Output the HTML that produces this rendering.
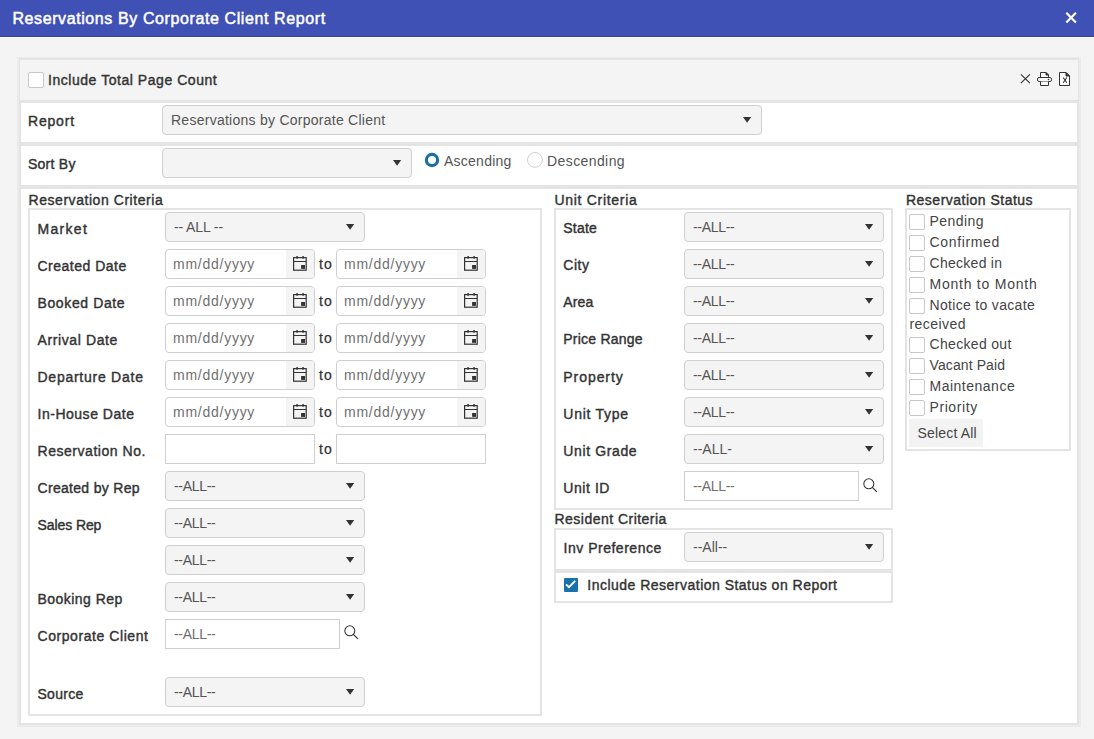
<!DOCTYPE html><html><head><meta charset="utf-8"><style>
*{box-sizing:border-box}
html,body{margin:0;padding:0}
body{width:1094px;height:739px;overflow:hidden;background:#f4f4f4;position:relative;font-family:"Liberation Sans",sans-serif}
.abs{position:absolute}
.t{position:absolute;white-space:nowrap}
.sel{position:absolute;border:1px solid #cfcfcf;border-radius:4px;background:#f4f4f4}
.st{position:absolute;left:8px;top:6px;font-size:14px;line-height:16px;white-space:nowrap}
.inp{position:absolute;border:1px solid #cfcfcf;background:#fff;overflow:hidden}
.ph{position:absolute;left:8px;top:6px;font-size:14px;line-height:16px;color:#707070;white-space:nowrap}
.addon{position:absolute;right:0;top:0;width:28px;height:28px;background:#f4f4f4}
.cb{border:1px solid #c9c9c9;border-radius:2px;background:#fff}
</style></head><body>
<div class="abs" style="left:0px;top:0px;width:1094px;height:36px;background:#3f51b5;;"></div>
<div class="abs" style="left:0px;top:36px;width:1094px;height:1px;background:#33429f;;"></div>
<div class="abs" style="left:0px;top:37px;width:1094px;height:1px;background:#fdfdfb;;"></div>
<div class="t" style="left:12.4px;top:10.06px;font-size:16px;line-height:18px;font-weight:normal;color:#fff;-webkit-text-stroke:0.5px #fff;letter-spacing:0.6px">Reservations By Corporate Client Report</div>
<svg class="abs" style="left:1064px;top:11px" width="14" height="14" viewBox="0 0 14 14"><path d="M2.3 1.8L11.9 11.5M11.9 1.8L2.3 11.5" stroke="#fff" stroke-width="2.2"/></svg>
<div class="abs" style="left:17px;top:57px;width:1064px;height:670px;background:#ebebeb;;"></div>
<div class="abs" style="left:19px;top:58px;width:1060px;height:667px;background:#e4e4e4;;"></div>
<div class="abs" style="left:20px;top:60px;width:1058px;height:40px;background:#f4f4f4;;"></div>
<div class="abs" style="left:21px;top:103px;width:1056px;height:39px;background:#fff;;"></div>
<div class="abs" style="left:21px;top:146px;width:1056px;height:39px;background:#fff;;"></div>
<div class="abs" style="left:21px;top:189px;width:1056px;height:534px;background:#fff;;"></div>
<div class="abs cb" style="left:28px;top:72px;width:16px;height:16px"></div>
<div class="t" style="left:48px;top:72.15px;font-size:14px;line-height:16px;font-weight:normal;color:#333;-webkit-text-stroke:0.4px #333;letter-spacing:0.543px;">Include Total Page Count</div>
<svg class="abs" style="left:1020px;top:73px" width="11" height="11" viewBox="0 0 11 11"><path d="M0.9 1.3L9.9 10.1M9.9 1.3L0.9 10.1" stroke="#333" stroke-width="1.15"/></svg>
<svg class="abs" style="left:1034px;top:68px" width="40" height="22" viewBox="0 0 40 22" fill="none" stroke="#333" stroke-width="1"><path d="M6.5 9.5V4.5H12L14.5 7V9.5" fill="#fff"/><path d="M12 4.5V7H14.5Z" fill="#333"/><rect x="3.5" y="9.5" width="14" height="4" rx="1.6" fill="#fff"/><path d="M6.5 13.5V17.5H14.5V13.5" fill="#fff"/><circle cx="14.5" cy="11.5" r="0.8" fill="#333" stroke="none"/><path d="M25.5 4.5H32L35.5 8V17.5H25.5Z" fill="#fff"/><path d="M32 4.5V8H35.5Z" fill="#333"/><path d="M29.2 9.5L32.8 14.7M32.8 9.5L29.2 14.7" stroke-width="1.1"/></svg>
<div class="t" style="left:28px;top:113.15px;font-size:14px;line-height:16px;font-weight:normal;color:#333;-webkit-text-stroke:0.4px #333;letter-spacing:0.8px;">Report</div>
<div class="sel" style="left:162px;top:105px;width:600px;height:30px"><span class="st" style="color:#555;letter-spacing:0.258px">Reservations by Corporate Client</span><svg style="position:absolute;left:580px;top:11px" width="9" height="7" viewBox="0 0 9 7"><path d="M0 0H8.2L4.1 5.8Z" fill="#333"/></svg></div>
<div class="t" style="left:28px;top:156.15px;font-size:14px;line-height:16px;font-weight:normal;color:#333;-webkit-text-stroke:0.4px #333;letter-spacing:0.25px;">Sort By</div>
<div class="sel" style="left:162px;top:148px;width:250px;height:30px"><span class="st" style="color:#555;letter-spacing:0px"></span><svg style="position:absolute;left:230px;top:11px" width="9" height="7" viewBox="0 0 9 7"><path d="M0 0H8.2L4.1 5.8Z" fill="#333"/></svg></div>
<svg class="abs" style="left:420px;top:148px" width="28" height="24" viewBox="0 0 28 24"><circle cx="12" cy="12" r="5.6" fill="#fff" stroke="#1a6ea8" stroke-width="3.1"/></svg>
<div class="t" style="left:444px;top:153.15px;font-size:14px;line-height:16px;font-weight:normal;color:#555;letter-spacing:0.25px">Ascending</div>
<svg class="abs" style="left:522px;top:148px" width="28" height="24" viewBox="0 0 28 24"><circle cx="12.9" cy="11.9" r="7.4" fill="#fff" stroke="#cfcfcf" stroke-width="1"/></svg>
<div class="t" style="left:547px;top:153.15px;font-size:14px;line-height:16px;font-weight:normal;color:#555;letter-spacing:0.41px">Descending</div>
<div class="t" style="left:28.5px;top:192.15px;font-size:14px;line-height:16px;font-weight:normal;color:#333;-webkit-text-stroke:0.4px #333;letter-spacing:0.553px;">Reservation Criteria</div>
<div class="abs" style="left:28px;top:208px;width:514px;height:508px;background:transparent;border:2px solid #e4e4e4;"></div>
<div class="t" style="left:37.5px;top:221.15px;font-size:14px;line-height:16px;font-weight:normal;color:#333;-webkit-text-stroke:0.4px #333;letter-spacing:1.3px;">Market</div>
<div class="sel" style="left:165px;top:212px;width:200px;height:30px"><span class="st" style="color:#555;letter-spacing:-0.125px">-- ALL --</span><svg style="position:absolute;left:180px;top:11px" width="9" height="7" viewBox="0 0 9 7"><path d="M0 0H8.2L4.1 5.8Z" fill="#333"/></svg></div>
<div class="t" style="left:37.5px;top:258.15px;font-size:14px;line-height:16px;font-weight:normal;color:#333;-webkit-text-stroke:0.4px #333;letter-spacing:0.5px;">Created Date</div>
<div class="inp" style="left:165px;top:249px;width:150px;height:30px;border-radius:4px"><span class="ph" style="left:7px;letter-spacing:0.744px">mm/dd/yyyy</span><div class="addon"><svg style="position:absolute;left:7px;top:5px" width="15" height="17" viewBox="0 0 15 17"><rect x="0.6" y="2.6" width="12.6" height="12.6" fill="none" stroke="#333" stroke-width="1.2"/><line x1="0.6" y1="6.5" x2="13.2" y2="6.5" stroke="#333" stroke-width="1.2"/><rect x="3.3" y="1" width="1.5" height="2.8" rx="0.5" fill="#333"/><rect x="9.3" y="1" width="1.5" height="2.8" rx="0.5" fill="#333"/><rect x="8.1" y="10" width="3.9" height="3.9" fill="#333"/></svg></div></div>
<div class="t" style="left:319px;top:256.15px;font-size:14px;line-height:16px;font-weight:normal;color:#333;-webkit-text-stroke:0.25px #333;letter-spacing:1.2px;">to</div>
<div class="inp" style="left:336px;top:249px;width:150px;height:30px;border-radius:4px"><span class="ph" style="left:7px;letter-spacing:0.744px">mm/dd/yyyy</span><div class="addon"><svg style="position:absolute;left:7px;top:5px" width="15" height="17" viewBox="0 0 15 17"><rect x="0.6" y="2.6" width="12.6" height="12.6" fill="none" stroke="#333" stroke-width="1.2"/><line x1="0.6" y1="6.5" x2="13.2" y2="6.5" stroke="#333" stroke-width="1.2"/><rect x="3.3" y="1" width="1.5" height="2.8" rx="0.5" fill="#333"/><rect x="9.3" y="1" width="1.5" height="2.8" rx="0.5" fill="#333"/><rect x="8.1" y="10" width="3.9" height="3.9" fill="#333"/></svg></div></div>
<div class="t" style="left:37.5px;top:295.15px;font-size:14px;line-height:16px;font-weight:normal;color:#333;-webkit-text-stroke:0.4px #333;letter-spacing:0.62px;">Booked Date</div>
<div class="inp" style="left:165px;top:286px;width:150px;height:30px;border-radius:4px"><span class="ph" style="left:7px;letter-spacing:0.744px">mm/dd/yyyy</span><div class="addon"><svg style="position:absolute;left:7px;top:5px" width="15" height="17" viewBox="0 0 15 17"><rect x="0.6" y="2.6" width="12.6" height="12.6" fill="none" stroke="#333" stroke-width="1.2"/><line x1="0.6" y1="6.5" x2="13.2" y2="6.5" stroke="#333" stroke-width="1.2"/><rect x="3.3" y="1" width="1.5" height="2.8" rx="0.5" fill="#333"/><rect x="9.3" y="1" width="1.5" height="2.8" rx="0.5" fill="#333"/><rect x="8.1" y="10" width="3.9" height="3.9" fill="#333"/></svg></div></div>
<div class="t" style="left:319px;top:293.15px;font-size:14px;line-height:16px;font-weight:normal;color:#333;-webkit-text-stroke:0.25px #333;letter-spacing:1.2px;">to</div>
<div class="inp" style="left:336px;top:286px;width:150px;height:30px;border-radius:4px"><span class="ph" style="left:7px;letter-spacing:0.744px">mm/dd/yyyy</span><div class="addon"><svg style="position:absolute;left:7px;top:5px" width="15" height="17" viewBox="0 0 15 17"><rect x="0.6" y="2.6" width="12.6" height="12.6" fill="none" stroke="#333" stroke-width="1.2"/><line x1="0.6" y1="6.5" x2="13.2" y2="6.5" stroke="#333" stroke-width="1.2"/><rect x="3.3" y="1" width="1.5" height="2.8" rx="0.5" fill="#333"/><rect x="9.3" y="1" width="1.5" height="2.8" rx="0.5" fill="#333"/><rect x="8.1" y="10" width="3.9" height="3.9" fill="#333"/></svg></div></div>
<div class="t" style="left:37.5px;top:332.15px;font-size:14px;line-height:16px;font-weight:normal;color:#333;-webkit-text-stroke:0.4px #333;letter-spacing:0.609px;">Arrival Date</div>
<div class="inp" style="left:165px;top:323px;width:150px;height:30px;border-radius:4px"><span class="ph" style="left:7px;letter-spacing:0.744px">mm/dd/yyyy</span><div class="addon"><svg style="position:absolute;left:7px;top:5px" width="15" height="17" viewBox="0 0 15 17"><rect x="0.6" y="2.6" width="12.6" height="12.6" fill="none" stroke="#333" stroke-width="1.2"/><line x1="0.6" y1="6.5" x2="13.2" y2="6.5" stroke="#333" stroke-width="1.2"/><rect x="3.3" y="1" width="1.5" height="2.8" rx="0.5" fill="#333"/><rect x="9.3" y="1" width="1.5" height="2.8" rx="0.5" fill="#333"/><rect x="8.1" y="10" width="3.9" height="3.9" fill="#333"/></svg></div></div>
<div class="t" style="left:319px;top:330.15px;font-size:14px;line-height:16px;font-weight:normal;color:#333;-webkit-text-stroke:0.25px #333;letter-spacing:1.2px;">to</div>
<div class="inp" style="left:336px;top:323px;width:150px;height:30px;border-radius:4px"><span class="ph" style="left:7px;letter-spacing:0.744px">mm/dd/yyyy</span><div class="addon"><svg style="position:absolute;left:7px;top:5px" width="15" height="17" viewBox="0 0 15 17"><rect x="0.6" y="2.6" width="12.6" height="12.6" fill="none" stroke="#333" stroke-width="1.2"/><line x1="0.6" y1="6.5" x2="13.2" y2="6.5" stroke="#333" stroke-width="1.2"/><rect x="3.3" y="1" width="1.5" height="2.8" rx="0.5" fill="#333"/><rect x="9.3" y="1" width="1.5" height="2.8" rx="0.5" fill="#333"/><rect x="8.1" y="10" width="3.9" height="3.9" fill="#333"/></svg></div></div>
<div class="t" style="left:37.5px;top:369.15px;font-size:14px;line-height:16px;font-weight:normal;color:#333;-webkit-text-stroke:0.4px #333;letter-spacing:0.746px;">Departure Date</div>
<div class="inp" style="left:165px;top:360px;width:150px;height:30px;border-radius:4px"><span class="ph" style="left:7px;letter-spacing:0.744px">mm/dd/yyyy</span><div class="addon"><svg style="position:absolute;left:7px;top:5px" width="15" height="17" viewBox="0 0 15 17"><rect x="0.6" y="2.6" width="12.6" height="12.6" fill="none" stroke="#333" stroke-width="1.2"/><line x1="0.6" y1="6.5" x2="13.2" y2="6.5" stroke="#333" stroke-width="1.2"/><rect x="3.3" y="1" width="1.5" height="2.8" rx="0.5" fill="#333"/><rect x="9.3" y="1" width="1.5" height="2.8" rx="0.5" fill="#333"/><rect x="8.1" y="10" width="3.9" height="3.9" fill="#333"/></svg></div></div>
<div class="t" style="left:319px;top:367.15px;font-size:14px;line-height:16px;font-weight:normal;color:#333;-webkit-text-stroke:0.25px #333;letter-spacing:1.2px;">to</div>
<div class="inp" style="left:336px;top:360px;width:150px;height:30px;border-radius:4px"><span class="ph" style="left:7px;letter-spacing:0.744px">mm/dd/yyyy</span><div class="addon"><svg style="position:absolute;left:7px;top:5px" width="15" height="17" viewBox="0 0 15 17"><rect x="0.6" y="2.6" width="12.6" height="12.6" fill="none" stroke="#333" stroke-width="1.2"/><line x1="0.6" y1="6.5" x2="13.2" y2="6.5" stroke="#333" stroke-width="1.2"/><rect x="3.3" y="1" width="1.5" height="2.8" rx="0.5" fill="#333"/><rect x="9.3" y="1" width="1.5" height="2.8" rx="0.5" fill="#333"/><rect x="8.1" y="10" width="3.9" height="3.9" fill="#333"/></svg></div></div>
<div class="t" style="left:37.5px;top:406.15px;font-size:14px;line-height:16px;font-weight:normal;color:#333;-webkit-text-stroke:0.4px #333;letter-spacing:0.517px;">In-House Date</div>
<div class="inp" style="left:165px;top:397px;width:150px;height:30px;border-radius:4px"><span class="ph" style="left:7px;letter-spacing:0.744px">mm/dd/yyyy</span><div class="addon"><svg style="position:absolute;left:7px;top:5px" width="15" height="17" viewBox="0 0 15 17"><rect x="0.6" y="2.6" width="12.6" height="12.6" fill="none" stroke="#333" stroke-width="1.2"/><line x1="0.6" y1="6.5" x2="13.2" y2="6.5" stroke="#333" stroke-width="1.2"/><rect x="3.3" y="1" width="1.5" height="2.8" rx="0.5" fill="#333"/><rect x="9.3" y="1" width="1.5" height="2.8" rx="0.5" fill="#333"/><rect x="8.1" y="10" width="3.9" height="3.9" fill="#333"/></svg></div></div>
<div class="t" style="left:319px;top:404.15px;font-size:14px;line-height:16px;font-weight:normal;color:#333;-webkit-text-stroke:0.25px #333;letter-spacing:1.2px;">to</div>
<div class="inp" style="left:336px;top:397px;width:150px;height:30px;border-radius:4px"><span class="ph" style="left:7px;letter-spacing:0.744px">mm/dd/yyyy</span><div class="addon"><svg style="position:absolute;left:7px;top:5px" width="15" height="17" viewBox="0 0 15 17"><rect x="0.6" y="2.6" width="12.6" height="12.6" fill="none" stroke="#333" stroke-width="1.2"/><line x1="0.6" y1="6.5" x2="13.2" y2="6.5" stroke="#333" stroke-width="1.2"/><rect x="3.3" y="1" width="1.5" height="2.8" rx="0.5" fill="#333"/><rect x="9.3" y="1" width="1.5" height="2.8" rx="0.5" fill="#333"/><rect x="8.1" y="10" width="3.9" height="3.9" fill="#333"/></svg></div></div>
<div class="t" style="left:37.5px;top:443.15px;font-size:14px;line-height:16px;font-weight:normal;color:#333;-webkit-text-stroke:0.4px #333;letter-spacing:0.543px;">Reservation No.</div>
<div class="inp" style="left:165px;top:434px;width:150px;height:30px"><span class="ph" style="letter-spacing:0px"></span></div>
<div class="t" style="left:319px;top:441.15px;font-size:14px;line-height:16px;font-weight:normal;color:#333;-webkit-text-stroke:0.25px #333;letter-spacing:1.2px;">to</div>
<div class="inp" style="left:336px;top:434px;width:150px;height:30px"><span class="ph" style="letter-spacing:0px"></span></div>
<div class="t" style="left:37.5px;top:480.15px;font-size:14px;line-height:16px;font-weight:normal;color:#333;-webkit-text-stroke:0.4px #333;letter-spacing:0.308px;">Created by Rep</div>
<div class="sel" style="left:165px;top:471px;width:200px;height:30px"><span class="st" style="color:#555;letter-spacing:-0.3px">--ALL--</span><svg style="position:absolute;left:180px;top:11px" width="9" height="7" viewBox="0 0 9 7"><path d="M0 0H8.2L4.1 5.8Z" fill="#333"/></svg></div>
<div class="t" style="left:37.5px;top:517.15px;font-size:14px;line-height:16px;font-weight:normal;color:#333;-webkit-text-stroke:0.4px #333;letter-spacing:-0.088px;">Sales Rep</div>
<div class="sel" style="left:165px;top:508px;width:200px;height:30px"><span class="st" style="color:#555;letter-spacing:-0.3px">--ALL--</span><svg style="position:absolute;left:180px;top:11px" width="9" height="7" viewBox="0 0 9 7"><path d="M0 0H8.2L4.1 5.8Z" fill="#333"/></svg></div>
<div class="sel" style="left:165px;top:545px;width:200px;height:30px"><span class="st" style="color:#555;letter-spacing:-0.3px">--ALL--</span><svg style="position:absolute;left:180px;top:11px" width="9" height="7" viewBox="0 0 9 7"><path d="M0 0H8.2L4.1 5.8Z" fill="#333"/></svg></div>
<div class="t" style="left:37.5px;top:591.15px;font-size:14px;line-height:16px;font-weight:normal;color:#333;-webkit-text-stroke:0.4px #333;letter-spacing:0.46px;">Booking Rep</div>
<div class="sel" style="left:165px;top:582px;width:200px;height:30px"><span class="st" style="color:#555;letter-spacing:-0.3px">--ALL--</span><svg style="position:absolute;left:180px;top:11px" width="9" height="7" viewBox="0 0 9 7"><path d="M0 0H8.2L4.1 5.8Z" fill="#333"/></svg></div>
<div class="t" style="left:37.5px;top:628.15px;font-size:14px;line-height:16px;font-weight:normal;color:#333;-webkit-text-stroke:0.4px #333;letter-spacing:0.567px;">Corporate Client</div>
<div class="inp" style="left:165px;top:619px;width:175px;height:30px"><span class="ph" style="letter-spacing:-0.3px">--ALL--</span></div>
<div class="abs" style="left:343.7px;top:625.4px;width:15px;height:15px"><svg width="15" height="15" viewBox="0 0 15 15"><circle cx="5.8" cy="5.8" r="5" fill="none" stroke="#333" stroke-width="1.05"/><line x1="9.4" y1="9.4" x2="13.9" y2="13.9" stroke="#333" stroke-width="1.25"/></svg></div>
<div class="t" style="left:37.5px;top:686.15px;font-size:14px;line-height:16px;font-weight:normal;color:#333;-webkit-text-stroke:0.4px #333;letter-spacing:0.28px;">Source</div>
<div class="sel" style="left:165px;top:677px;width:200px;height:30px"><span class="st" style="color:#555;letter-spacing:-0.3px">--ALL--</span><svg style="position:absolute;left:180px;top:11px" width="9" height="7" viewBox="0 0 9 7"><path d="M0 0H8.2L4.1 5.8Z" fill="#333"/></svg></div>
<div class="t" style="left:554.5px;top:192.15px;font-size:14px;line-height:16px;font-weight:normal;color:#333;-webkit-text-stroke:0.4px #333;letter-spacing:0.7px;">Unit Criteria</div>
<div class="abs" style="left:554px;top:208px;width:339px;height:302px;background:transparent;border:2px solid #e4e4e4;"></div>
<div class="t" style="left:563.3px;top:220.15px;font-size:14px;line-height:16px;font-weight:normal;color:#333;-webkit-text-stroke:0.4px #333;letter-spacing:0.225px;">State</div>
<div class="sel" style="left:684px;top:212px;width:200px;height:30px"><span class="st" style="color:#555;letter-spacing:-0.3px">--ALL--</span><svg style="position:absolute;left:180px;top:11px" width="9" height="7" viewBox="0 0 9 7"><path d="M0 0H8.2L4.1 5.8Z" fill="#333"/></svg></div>
<div class="t" style="left:563.3px;top:257.15px;font-size:14px;line-height:16px;font-weight:normal;color:#333;-webkit-text-stroke:0.4px #333;letter-spacing:0.5px;">City</div>
<div class="sel" style="left:684px;top:249px;width:200px;height:30px"><span class="st" style="color:#555;letter-spacing:-0.3px">--ALL--</span><svg style="position:absolute;left:180px;top:11px" width="9" height="7" viewBox="0 0 9 7"><path d="M0 0H8.2L4.1 5.8Z" fill="#333"/></svg></div>
<div class="t" style="left:563.3px;top:294.15px;font-size:14px;line-height:16px;font-weight:normal;color:#333;-webkit-text-stroke:0.4px #333;letter-spacing:0.133px;">Area</div>
<div class="sel" style="left:684px;top:286px;width:200px;height:30px"><span class="st" style="color:#555;letter-spacing:-0.3px">--ALL--</span><svg style="position:absolute;left:180px;top:11px" width="9" height="7" viewBox="0 0 9 7"><path d="M0 0H8.2L4.1 5.8Z" fill="#333"/></svg></div>
<div class="t" style="left:563.3px;top:331.15px;font-size:14px;line-height:16px;font-weight:normal;color:#333;-webkit-text-stroke:0.4px #333;letter-spacing:0.23px;">Price Range</div>
<div class="sel" style="left:684px;top:323px;width:200px;height:30px"><span class="st" style="color:#555;letter-spacing:-0.3px">--ALL--</span><svg style="position:absolute;left:180px;top:11px" width="9" height="7" viewBox="0 0 9 7"><path d="M0 0H8.2L4.1 5.8Z" fill="#333"/></svg></div>
<div class="t" style="left:563.3px;top:369.15px;font-size:14px;line-height:16px;font-weight:normal;color:#333;-webkit-text-stroke:0.4px #333;letter-spacing:0.943px;">Property</div>
<div class="sel" style="left:684px;top:360px;width:200px;height:30px"><span class="st" style="color:#555;letter-spacing:-0.3px">--ALL--</span><svg style="position:absolute;left:180px;top:11px" width="9" height="7" viewBox="0 0 9 7"><path d="M0 0H8.2L4.1 5.8Z" fill="#333"/></svg></div>
<div class="t" style="left:563.3px;top:406.15px;font-size:14px;line-height:16px;font-weight:normal;color:#333;-webkit-text-stroke:0.4px #333;letter-spacing:0.737px;">Unit Type</div>
<div class="sel" style="left:684px;top:397px;width:200px;height:30px"><span class="st" style="color:#555;letter-spacing:-0.3px">--ALL--</span><svg style="position:absolute;left:180px;top:11px" width="9" height="7" viewBox="0 0 9 7"><path d="M0 0H8.2L4.1 5.8Z" fill="#333"/></svg></div>
<div class="t" style="left:563.3px;top:443.15px;font-size:14px;line-height:16px;font-weight:normal;color:#333;-webkit-text-stroke:0.4px #333;letter-spacing:0.622px;">Unit Grade</div>
<div class="sel" style="left:684px;top:434px;width:200px;height:30px"><span class="st" style="color:#555;letter-spacing:0px">--ALL-</span><svg style="position:absolute;left:180px;top:11px" width="9" height="7" viewBox="0 0 9 7"><path d="M0 0H8.2L4.1 5.8Z" fill="#333"/></svg></div>
<div class="t" style="left:563.3px;top:480.15px;font-size:14px;line-height:16px;font-weight:normal;color:#333;-webkit-text-stroke:0.4px #333;letter-spacing:0.567px;">Unit ID</div>
<div class="inp" style="left:684px;top:471px;width:175px;height:30px"><span class="ph" style="letter-spacing:-0.3px">--ALL--</span></div>
<div class="abs" style="left:862.8px;top:477.6px;width:15px;height:15px"><svg width="15" height="15" viewBox="0 0 15 15"><circle cx="5.8" cy="5.8" r="5" fill="none" stroke="#333" stroke-width="1.05"/><line x1="9.4" y1="9.4" x2="13.9" y2="13.9" stroke="#333" stroke-width="1.25"/></svg></div>
<div class="t" style="left:554.5px;top:511.15px;font-size:14px;line-height:16px;font-weight:normal;color:#333;-webkit-text-stroke:0.4px #333;letter-spacing:0.475px;">Resident Criteria</div>
<div class="abs" style="left:554px;top:528px;width:339px;height:43px;background:transparent;border:2px solid #e4e4e4;"></div>
<div class="t" style="left:563.5px;top:540.15px;font-size:14px;line-height:16px;font-weight:normal;color:#333;-webkit-text-stroke:0.4px #333;letter-spacing:0.515px;">Inv Preference</div>
<div class="sel" style="left:684px;top:532px;width:200px;height:30px"><span class="st" style="color:#555;letter-spacing:0px">--All--</span><svg style="position:absolute;left:180px;top:11px" width="9" height="7" viewBox="0 0 9 7"><path d="M0 0H8.2L4.1 5.8Z" fill="#333"/></svg></div>
<div class="abs" style="left:554px;top:569px;width:339px;height:34px;background:transparent;border:2px solid #e4e4e4;"></div>
<div class="abs" style="left:554px;top:571px;width:339px;height:2px;background:#e4e4e4;;"></div>
<div class="abs" style="left:564px;top:578px;width:14px;height:14px;background:#1771ad;border-radius:1px"><svg width="14" height="14" viewBox="0 0 15 15"><path d="M2.2 6.9L5.3 9.9L12 3" fill="none" stroke="#fff" stroke-width="2"/></svg></div>
<div class="t" style="left:587.3px;top:577.15px;font-size:14px;line-height:16px;font-weight:normal;color:#333;-webkit-text-stroke:0.4px #333;letter-spacing:0.486px;">Include Reservation Status on Report</div>
<div class="t" style="left:906px;top:191.85px;font-size:14px;line-height:16px;font-weight:normal;color:#333;-webkit-text-stroke:0.4px #333;letter-spacing:0.488px;">Reservation Status</div>
<div class="abs" style="left:905px;top:208px;width:166px;height:243px;background:transparent;border:2px solid #e4e4e4;"></div>
<div class="abs cb" style="left:909px;top:214px;width:16px;height:16px"></div>
<div class="t" style="left:929.5px;top:213.15px;font-size:14px;line-height:16px;font-weight:normal;color:#444;letter-spacing:0.45px">Pending</div>
<div class="abs cb" style="left:909px;top:235px;width:16px;height:16px"></div>
<div class="t" style="left:929.5px;top:234.15px;font-size:14px;line-height:16px;font-weight:normal;color:#444;letter-spacing:0.65px">Confirmed</div>
<div class="abs cb" style="left:909px;top:256px;width:16px;height:16px"></div>
<div class="t" style="left:929.5px;top:255.15px;font-size:14px;line-height:16px;font-weight:normal;color:#444;letter-spacing:0.278px">Checked in</div>
<div class="abs cb" style="left:909px;top:277px;width:16px;height:16px"></div>
<div class="t" style="left:929.5px;top:276.15px;font-size:14px;line-height:16px;font-weight:normal;color:#444;letter-spacing:0.762px">Month to Month</div>
<div class="abs cb" style="left:909px;top:298px;width:16px;height:16px"></div>
<div class="t" style="left:929.5px;top:297.15px;font-size:14px;line-height:16px;font-weight:normal;color:#444;letter-spacing:0.32px">Notice to vacate</div>
<div class="abs cb" style="left:909px;top:337px;width:16px;height:16px"></div>
<div class="t" style="left:929.5px;top:336.15px;font-size:14px;line-height:16px;font-weight:normal;color:#444;letter-spacing:0.32px">Checked out</div>
<div class="abs cb" style="left:909px;top:358px;width:16px;height:16px"></div>
<div class="t" style="left:929.5px;top:357.15px;font-size:14px;line-height:16px;font-weight:normal;color:#444;letter-spacing:0.1px">Vacant Paid</div>
<div class="abs cb" style="left:909px;top:379px;width:16px;height:16px"></div>
<div class="t" style="left:929.5px;top:378.15px;font-size:14px;line-height:16px;font-weight:normal;color:#444;letter-spacing:0.5px">Maintenance</div>
<div class="abs cb" style="left:909px;top:400px;width:16px;height:16px"></div>
<div class="t" style="left:929.5px;top:399.15px;font-size:14px;line-height:16px;font-weight:normal;color:#444;letter-spacing:0.586px">Priority</div>
<div class="t" style="left:909.5px;top:315.65px;font-size:14px;line-height:16px;font-weight:normal;color:#444;letter-spacing:0.43px">received</div>
<div class="abs" style="left:909px;top:419px;width:74px;height:28px;background:#f3f3f3;;"></div>
<div class="t" style="left:917.6px;top:425.15px;font-size:14px;line-height:16px;font-weight:normal;color:#444;letter-spacing:0.17px">Select All</div>
</body></html>
